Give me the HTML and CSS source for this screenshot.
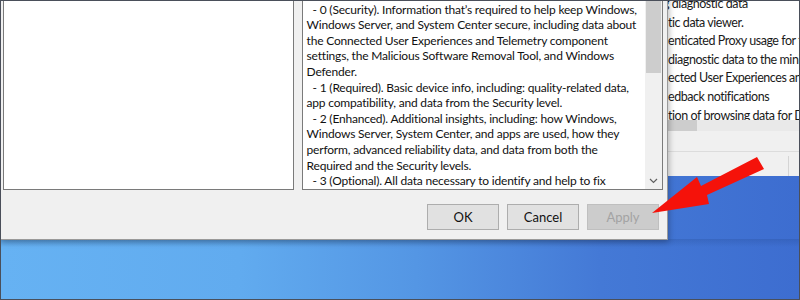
FILE: index.html
```html
<!DOCTYPE html>
<html lang="en">
<head>
<meta charset="utf-8">
<title>Allow Diagnostic Data</title>
<link rel="stylesheet" href="styles.css">
</head>
<body>
<div class="screen">
  <div class="bgwin">
    <div class="list">
      <div class="item cut">g diagnostic data</div>
      <div class="item">tic data viewer.</div>
      <div class="item">enticated Proxy usage for the Connected User Experience</div>
      <div class="item">diagnostic data to the minimum required</div>
      <div class="item">ected User Experiences and Telemetry</div>
      <div class="item">edback notifications</div>
      <div class="item">tion of browsing data for Desktop Analytics</div>
    </div>
    <div class="hscroll"><div class="hthumb"></div></div>
    <div class="winfoot"><div class="status"><span class="sep"></span></div></div>
  </div>

  <div class="dialog">
    <div class="panes">
      <div class="box options"></div>
      <div class="box help">
        <div class="helptext">
          <div class="ln">additional apps installed by your organization.</div>
          <div class="ln ind">- 0 (Security). Information that’s required to help keep Windows,</div>
          <div class="ln">Windows Server, and System Center secure, including data about</div>
          <div class="ln">the Connected User Experiences and Telemetry component</div>
          <div class="ln">settings, the Malicious Software Removal Tool, and Windows</div>
          <div class="ln">Defender.</div>
          <div class="ln ind">- 1 (Required). Basic device info, including: quality-related data,</div>
          <div class="ln">app compatibility, and data from the Security level.</div>
          <div class="ln ind">- 2 (Enhanced). Additional insights, including: how Windows,</div>
          <div class="ln">Windows Server, System Center, and apps are used, how they</div>
          <div class="ln">perform, advanced reliability data, and data from both the</div>
          <div class="ln">Required and the Security levels.</div>
          <div class="ln ind">- 3 (Optional). All data necessary to identify and help to fix</div>
          <div class="ln">problems with devices.</div>
        </div>
        <div class="vscroll">
          <div class="thumb"></div>
          <div class="track"></div>
          <div class="down">
            <svg width="9" height="6" viewBox="0 0 9 6"><polyline points="1,1 4.5,4.5 8,1" fill="none" stroke="#606060" stroke-width="1.2"/></svg>
          </div>
        </div>
      </div>
    </div>
    <div class="buttons">
      <button class="btn">OK</button>
      <button class="btn">Cancel</button>
      <button class="btn disabled">Apply</button>
    </div>
  </div>

  <svg class="arrow" width="800" height="300" viewBox="0 0 800 300">
    <polygon points="652,213 697,177 701,186 757,157 764,169 707,195 709,204" fill="#f5120a"/>
  </svg>
</div>
</body>
</html>
```

FILE: styles.css
```css
* { box-sizing: border-box; }
html, body { margin: 0; padding: 0; }
body {
  width: 800px;
  height: 300px;
  overflow: hidden;
  font-family: Lato, "Noto Sans", sans-serif;
}
.screen {
  position: relative;
  width: 800px;
  height: 300px;
  overflow: hidden;
  background:
    linear-gradient(180deg, rgba(20,50,110,0.18) 0px, rgba(20,50,110,0) 8px) 0 239px / 100% 20px no-repeat,
    linear-gradient(90deg, #66b2f3 0%, #61abef 30%, #5496e4 52%, #4479d6 75%, #3d6dd0 100%);
}
.screen::after {
  content: "";
  position: absolute;
  inset: 0;
  border: 1px solid #4a4f5a;
  pointer-events: none;
  z-index: 10;
}

/* background window on the right */
.bgwin {
  position: absolute;
  left: 668px;
  top: 0;
  width: 132px;
  height: 176px;
  display: flex;
  flex-direction: column;
  background: #f0f0f0;
}
.list {
  height: 120px;
  background: #fff;
  overflow: hidden;
}
.item {
  white-space: nowrap;
  font-size: 12.5px;
  letter-spacing: -0.45px;
  line-height: 18.6px;
  color: #1a1a1a;
}
.item:first-child { margin-top: -5px; }
.cut { margin-left: -5px; }
.hscroll {
  height: 11px;
  background: #e9e9e9;
}
.hthumb {
  width: 29px;
  height: 100%;
  background: #cdcdcd;
}
.winfoot {
  flex: 1;
  display: flex;
  flex-direction: column;
  justify-content: flex-end;
}
.status {
  position: relative;
  height: 25px;
  border-top: 1px solid #dcdcdc;
}
.sep {
  position: absolute;
  left: 120px;
  top: 4px;
  bottom: 0;
  width: 1px;
  background: #d4d4d4;
}

/* dialog */
.dialog {
  position: absolute;
  left: 0;
  top: -40px;
  width: 668px;
  display: flex;
  flex-direction: column;
  padding: 20px 4px 9px 3px;
  background: #f0f0f0;
  border-right: 1px solid #9a9a9a;
  border-bottom: 1px solid #9a9a9a;
  box-shadow: 1px 2px 6px rgba(0,0,0,0.28);
  z-index: 2;
}
.panes {
  display: flex;
  gap: 8px;
  height: 210px;
}
.box {
  background: #fff;
  border: 1px solid #7a7a7a;
  height: 100%;
}
.options { width: 291px; }
.help {
  width: 362px;
  display: flex;
}
.helptext {
  flex: 1;
  overflow: hidden;
  padding: 5px 0 0 4px;
  color: #111;
  font-size: 12px;
  letter-spacing: -0.19px;
  line-height: 15.6px;
}
.ln { white-space: nowrap; }
.ind { text-indent: 6px; }
.vscroll {
  width: 17px;
  display: flex;
  flex-direction: column;
  background: #f0f0f0;
}
.thumb {
  height: 92px;
  margin: 0 1px;
  background: #cdcdcd;
}
.track { flex: 1; }
.down {
  height: 17px;
  display: flex;
  align-items: center;
  justify-content: center;
}
.down svg { display: block; }

.buttons {
  display: flex;
  justify-content: flex-end;
  gap: 8px;
  margin-top: 14px;
  padding-right: 4px;
}
.btn {
  width: 72px;
  height: 26px;
  padding: 0;
  font-family: inherit;
  font-size: 13px;
  color: #111;
  background: #e1e1e1;
  border: 1px solid #adadad;
  border-radius: 0;
}
.btn.disabled {
  background: #cccccc;
  border-color: #bfbfbf;
  color: #a3a3a3;
}

.arrow {
  position: absolute;
  left: 0;
  top: 0;
  z-index: 5;
  pointer-events: none;
}
```
